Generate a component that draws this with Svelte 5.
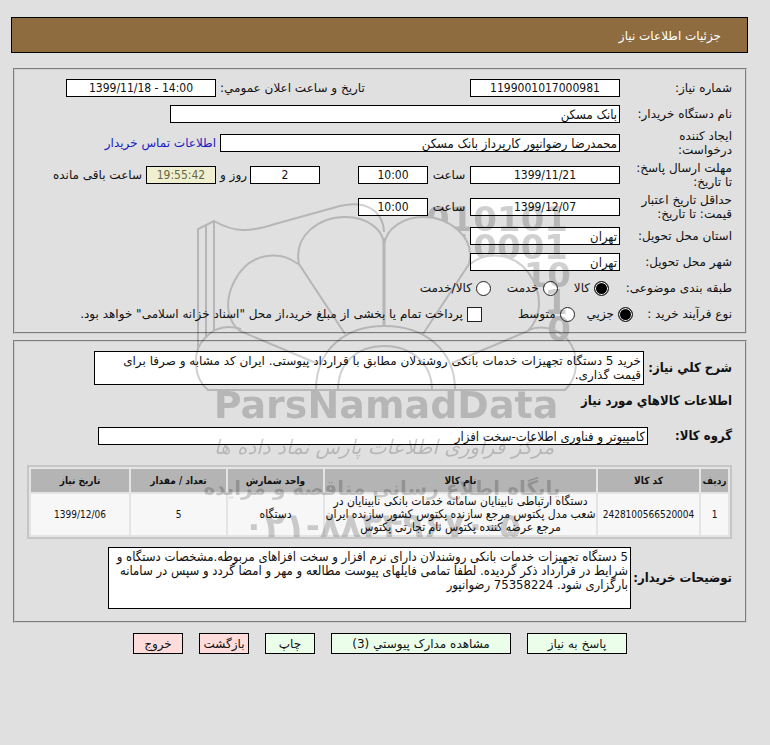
<script>
  let category = $state('goods');
  let process = $state('minor');
  let treasury = $state(false);

  const categories = [
    { id: 'goods', label: 'کالا' },
    { id: 'service', label: 'خدمت' },
    { id: 'both', label: 'کالا/خدمت' }
  ];
  const processes = [
    { id: 'minor', label: 'جزیي' },
    { id: 'medium', label: 'متوسط' }
  ];

  const summary =
    'خرید 5 دستگاه تجهیزات خدمات بانکی روشندلان مطابق با قرارداد پیوستی. ایران کد مشابه و صرفا برای\nقیمت گذاری.';
  const notes =
    '5 دستگاه تجهیزات خدمات بانکی روشندلان دارای نرم افزار و سخت افزاهای مربوطه.مشخصات دستگاه و\nشرایط در قرارداد ذکر گردیده. لطفا تمامی فایلهای پیوست مطالعه و مهر و امضا گردد و سپس در سامانه\nبارگزاری شود. 75358224 رضوانپور';

  const items = [
    {
      row: '1',
      code: '2428100566520004',
      name: [
        'دستگاه ارتباطی نابینایان سامانه خدمات بانکی نابینایان در',
        'شعب مدل پکتوس مرجع سازنده پکتوس کشور سازنده ایران',
        'مرجع عرضه کننده پکتوس نام تجارتی پکتوس'
      ],
      unit: 'دستگاه',
      count: '5',
      date: '1399/12/06'
    }
  ];
</script>

<main class="page" dir="rtl">
  <header class="title">جزئیات اطلاعات نیاز</header>

  <section class="panel">
    <div class="row">
      <label class="label" for="number">شماره نیاز:</label>
      <input id="number" class="field w150 center" readonly value="1199001017000981" />
      <label class="announce" for="announced">تاریخ و ساعت اعلان عمومي:</label>
      <input id="announced" class="field w150 center" dir="ltr" readonly value="1399/11/18 - 14:00" />
    </div>
    <div class="row">
      <label class="label" for="buyer">نام دستگاه خریدار:</label>
      <input id="buyer" class="field w450" readonly value="بانک مسکن" />
    </div>
    <div class="row tall">
      <label class="label" for="creator">ایجاد کننده<br />درخواست:</label>
      <input id="creator" class="field w400" readonly value="محمدرضا رضوانپور کارپرداز بانک مسکن" />
      <a href="#contact">اطلاعات تماس خریدار</a>
    </div>
    <div class="row tall">
      <label class="label" for="deadline">مهلت ارسال پاسخ:<br />تا تاریخ:</label>
      <input id="deadline" class="field w150 center" readonly value="1399/11/21" />
      <label class="unit" for="deadline-hour">ساعت</label>
      <input id="deadline-hour" class="field w70 center" readonly value="10:00" />
      <span class="spacer"></span>
      <input id="days" class="field w70 center" readonly value="2" />
      <label class="days" for="days">روز و</label>
      <input id="left" class="field w70 center left" readonly value="19:55:42" />
      <label for="left">ساعت باقی مانده</label>
    </div>
    <div class="row tall">
      <label class="label" for="validity">حداقل تاریخ اعتبار<br />قیمت: تا تاریخ:</label>
      <input id="validity" class="field w150 center" readonly value="1399/12/07" />
      <label class="unit" for="validity-hour">ساعت</label>
      <input id="validity-hour" class="field w70 center" readonly value="10:00" />
    </div>
    <div class="row">
      <label class="label" for="province">استان محل تحویل:</label>
      <input id="province" class="field w150" readonly value="تهران" />
    </div>
    <div class="row">
      <label class="label" for="city">شهر محل تحویل:</label>
      <input id="city" class="field w150" readonly value="تهران" />
    </div>
    <div class="row">
      <span class="caption">طبقه بندی موضوعی:</span>
      {#each categories as c}
        <label class="choice"><input type="radio" value={c.id} bind:group={category} />{c.label}</label>
      {/each}
    </div>
    <div class="row">
      <span class="caption narrow">نوع فرآیند خرید :</span>
      {#each processes as p}
        <label class="choice wide"><input type="radio" value={p.id} bind:group={process} />{p.label}</label>
      {/each}
      <label class="choice"
        ><input type="checkbox" bind:checked={treasury} />پرداخت تمام یا بخشی از مبلغ خرید،از محل "اسناد خزانه اسلامی" خواهد بود.</label
      >
    </div>
  </section>

  <section class="panel second">
    <div class="block">
      <label class="strong" for="summary">شرح کلي نیاز:</label>
      <textarea id="summary" class="field w550 two" readonly value={summary}></textarea>
    </div>
    <h2>اطلاعات کالاهاي مورد نیاز</h2>
    <div class="block">
      <label class="strong group" for="group">گروه کالا:</label>
      <input id="group" class="field w550" readonly value="کامپیوتر و فناوری اطلاعات-سخت افزار" />
    </div>
    <table>
      <colgroup>
        <col class="c-row" /><col class="c-code" /><col /><col class="c-unit" /><col class="c-unit" /><col class="c-date" />
      </colgroup>
      <thead>
        <tr>
          <th>ردیف</th><th>کد کالا</th><th>نام کالا</th><th>واحد شمارش</th><th>تعداد / مقدار</th><th>تاریخ نیاز</th>
        </tr>
      </thead>
      <tbody>
        {#each items as item}
          <tr>
            <td>{item.row}</td>
            <td>{item.code}</td>
            <td class="words">{#each item.name as line}<div>{line}</div>{/each}</td>
            <td class="words">{item.unit}</td>
            <td>{item.count}</td>
            <td>{item.date}</td>
          </tr>
        {/each}
      </tbody>
    </table>
    <div class="block">
      <label class="strong notes-label" for="notes">توضیحات خریدار:</label>
      <textarea id="notes" class="field notes" readonly value={notes}></textarea>
    </div>
  </section>

  <div class="actions">
    <button class="w100">پاسخ به نیاز</button>
    <button class="w180">مشاهده مدارک پیوستي (3)</button>
    <button>چاپ</button>
    <button class="red">بازگشت</button>
    <button class="red">خروج</button>
  </div>

  <svg class="watermark" width="400" height="360" viewBox="190 190 400 360" direction="ltr" aria-hidden="true">
    <mask id="behind">
      <rect x="190" y="190" width="400" height="360" fill="#fff" />
      <path d="M345 334L299 264C293 235 320 217 345 217C370 217 384 232 384 245C386 228 404 217 423 217C448 217 476 236 469 264C488 250 518 252 533 280C543 300 540 318 528 331L450 362Z" fill="#000" />
    </mask>
    <g class="digits" mask="url(#behind)" text-anchor="end">
      <text x="568" y="231">010101</text>
      <text x="568" y="259">10001</text>
      <text x="571" y="287">010</text>
      <text x="568" y="314">1</text>
      <text x="571" y="341">0</text>
    </g>
    <g fill="none" stroke="#000" stroke-width="2">
      <path d="M198 350V229L214 221C235 233 250 232 275 224L340 206C365 200 383 210 384 232M206 337V225M214 331V221" />
      <path d="M384 238V325" stroke-width="3" />
      <path d="M345 334L299 264C293 235 320 217 345 217C370 217 384 232 384 245C386 228 404 217 423 217C448 217 476 236 469 264L423 334" />
      <path d="M298 264C280 250 250 252 235 280C223 302 228 322 240 331L316 363M470 264C488 250 518 252 533 280C543 300 540 318 528 331L452 363" />
      <path d="M241 329C225 324 213 329 205 338C190 353 195 380 208 390H565C578 378 580 355 568 340C556 327 540 325 528 330" />
      <path d="M316 390C316 348 347 326 384 326C425 326 455 350 455 390M338 390C338 362 358 346 384 346C412 346 432 364 432 390" />
    </g>
    <g text-anchor="middle">
      <text class="brand" x="386" y="418">ParsNamadData</text>
      <text class="script" x="384" y="454" direction="rtl">مرکز فرآوری اطلاعات پارس نماد داده ها</text>
      <text class="tagline" x="382" y="495" direction="rtl">پایگاه اطلاع رسانی مناقصه و مزایده</text>
      <text class="phone" x="382" y="537">۰۲۱-۸۸۳۴۹۶۷۰-۵</text>
    </g>
  </svg>
</main>

<style>
  :global(body) {
    margin: 0;
    background: #e0e0e0;
  }
  .page {
    position: relative;
    box-sizing: border-box;
    padding: 17px 22px 24px 11px;
    color: #111;
    font: 12px/14px 'DejaVu Sans', sans-serif;
  }
  .title {
    display: flex;
    align-items: center;
    height: 32px;
    padding: 2px 26px 0;
    border: 1px solid #000;
    background: #8f6c3f;
    color: #fff;
  }
  .panel {
    margin: 15px 1px 0 2px;
    padding: 5px 13px;
    border: 2px groove #d0d0d0;
  }
  .second {
    margin-top: 6px;
    padding: 9px 13px 12px 12px;
  }
  .row {
    display: flex;
    align-items: center;
    height: 26px;
    white-space: nowrap;
  }
  .tall {
    height: 32px;
  }
  .label {
    width: 112px;
    flex: none;
  }
  .field {
    box-sizing: border-box;
    flex: none;
    height: 18px;
    margin: 0;
    padding: 0 2px;
    border: 1px solid #000;
    border-radius: 0;
    background: #fff;
    color: #111;
    font: 13px/14px 'DejaVu Sans Condensed', 'DejaVu Sans', sans-serif;
    outline: none;
  }
  .center {
    text-align: center;
    font-size: 12px;
  }
  .w70 { width: 70px; }
  .w150 { width: 150px; }
  .w400 { width: 400px; }
  .w450 { width: 450px; }
  .w550 { width: 550px; }
  .announce {
    width: 250px;
    text-align: left;
  }
  .announce,
  .w400,
  .left {
    margin-left: 4px;
  }
  .unit {
    width: 42px;
    text-align: center;
  }
  .days {
    width: 34px;
    padding-right: 3px;
    box-sizing: border-box;
    text-align: right;
  }
  .spacer {
    width: 38px;
  }
  .left {
    background: #f0f0d0;
    color: #666644;
  }
  a {
    color: #1a1ac0;
    text-decoration: none;
  }
  .caption {
    width: 123px;
  }
  .narrow {
    width: 99px;
  }
  .choice {
    display: flex;
    align-items: center;
    gap: 4px;
    margin-left: 16px;
  }
  .wide {
    margin-left: 12px;
  }
  .wide + .choice:not(.wide) {
    margin-right: 24px;
  }
  .choice input {
    appearance: none;
    box-sizing: border-box;
    width: 15px;
    height: 15px;
    margin: 0;
    border: 1px solid #222;
    background: #fff;
  }
  .choice input[type='radio'] {
    border-radius: 50%;
  }
  .choice input[type='radio']:checked {
    background: #000;
    box-shadow: inset 0 0 0 1px #fff;
  }
  .choice input[type='checkbox']:checked {
    box-shadow: inset 0 0 0 3px #fff;
    background: #000;
  }
  .block {
    display: flex;
    align-items: center;
  }
  .strong,
  h2 {
    font: bold 13px/16px 'DejaVu Sans Condensed', 'DejaVu Sans', sans-serif;
    white-space: nowrap;
  }
  .strong {
    width: 88px;
    flex: none;
  }
  .group {
    width: 84px;
  }
  .notes-label {
    width: 101px;
  }
  h2 {
    margin: 8px 0 18px;
  }
  textarea.field {
    display: block;
    padding: 2px;
    resize: none;
    overflow: hidden;
    white-space: pre;
  }
  textarea.two {
    height: 34px;
    font: inherit;
  }
  textarea.notes {
    width: 523px;
    height: 62px;
  }
  table {
    width: 100%;
    margin: 20px 0 8px;
    table-layout: fixed;
    border: 2px solid #c6c6c6;
    border-spacing: 2px;
    border-collapse: separate;
    background: #e4e4e4;
    text-align: center;
    font: 10px/13px 'DejaVu Sans Condensed', 'DejaVu Sans', sans-serif;
  }
  th {
    height: 23px;
    padding: 0;
    background: #b4b4b4;
    white-space: nowrap;
  }
  td {
    height: 41px;
    padding: 0;
    background: #f7f7f7;
    white-space: nowrap;
  }
  .words {
    font-size: 12px;
  }
  .c-row { width: 27px; }
  .c-code { width: 101px; }
  .c-unit { width: 95px; }
  .c-date { width: 98px; }
  .actions {
    display: flex;
    gap: 16px;
    margin-top: 10px;
    padding-right: 121px;
  }
  button {
    box-sizing: border-box;
    width: 50px;
    height: 21px;
    padding: 0;
    border: 1px solid #000;
    border-radius: 0;
    background: #eafeea;
    color: #111;
    font: inherit;
    white-space: nowrap;
  }
  .w100 { width: 100px; }
  .w180 { width: 180px; }
  .red {
    background: #ffdcdc;
  }
  .watermark {
    position: absolute;
    top: 190px;
    left: 190px;
    opacity: 0.18;
    pointer-events: none;
  }
  .digits {
    font: bold 34px 'DejaVu Sans', sans-serif;
  }
  .brand {
    font: bold 38px 'DejaVu Sans', sans-serif;
  }
  .script {
    font: italic 20px 'DejaVu Sans', sans-serif;
  }
  .tagline {
    font: bold 20px 'DejaVu Sans', sans-serif;
  }
  .phone {
    font: bold 34px 'DejaVu Sans', sans-serif;
  }
</style>
